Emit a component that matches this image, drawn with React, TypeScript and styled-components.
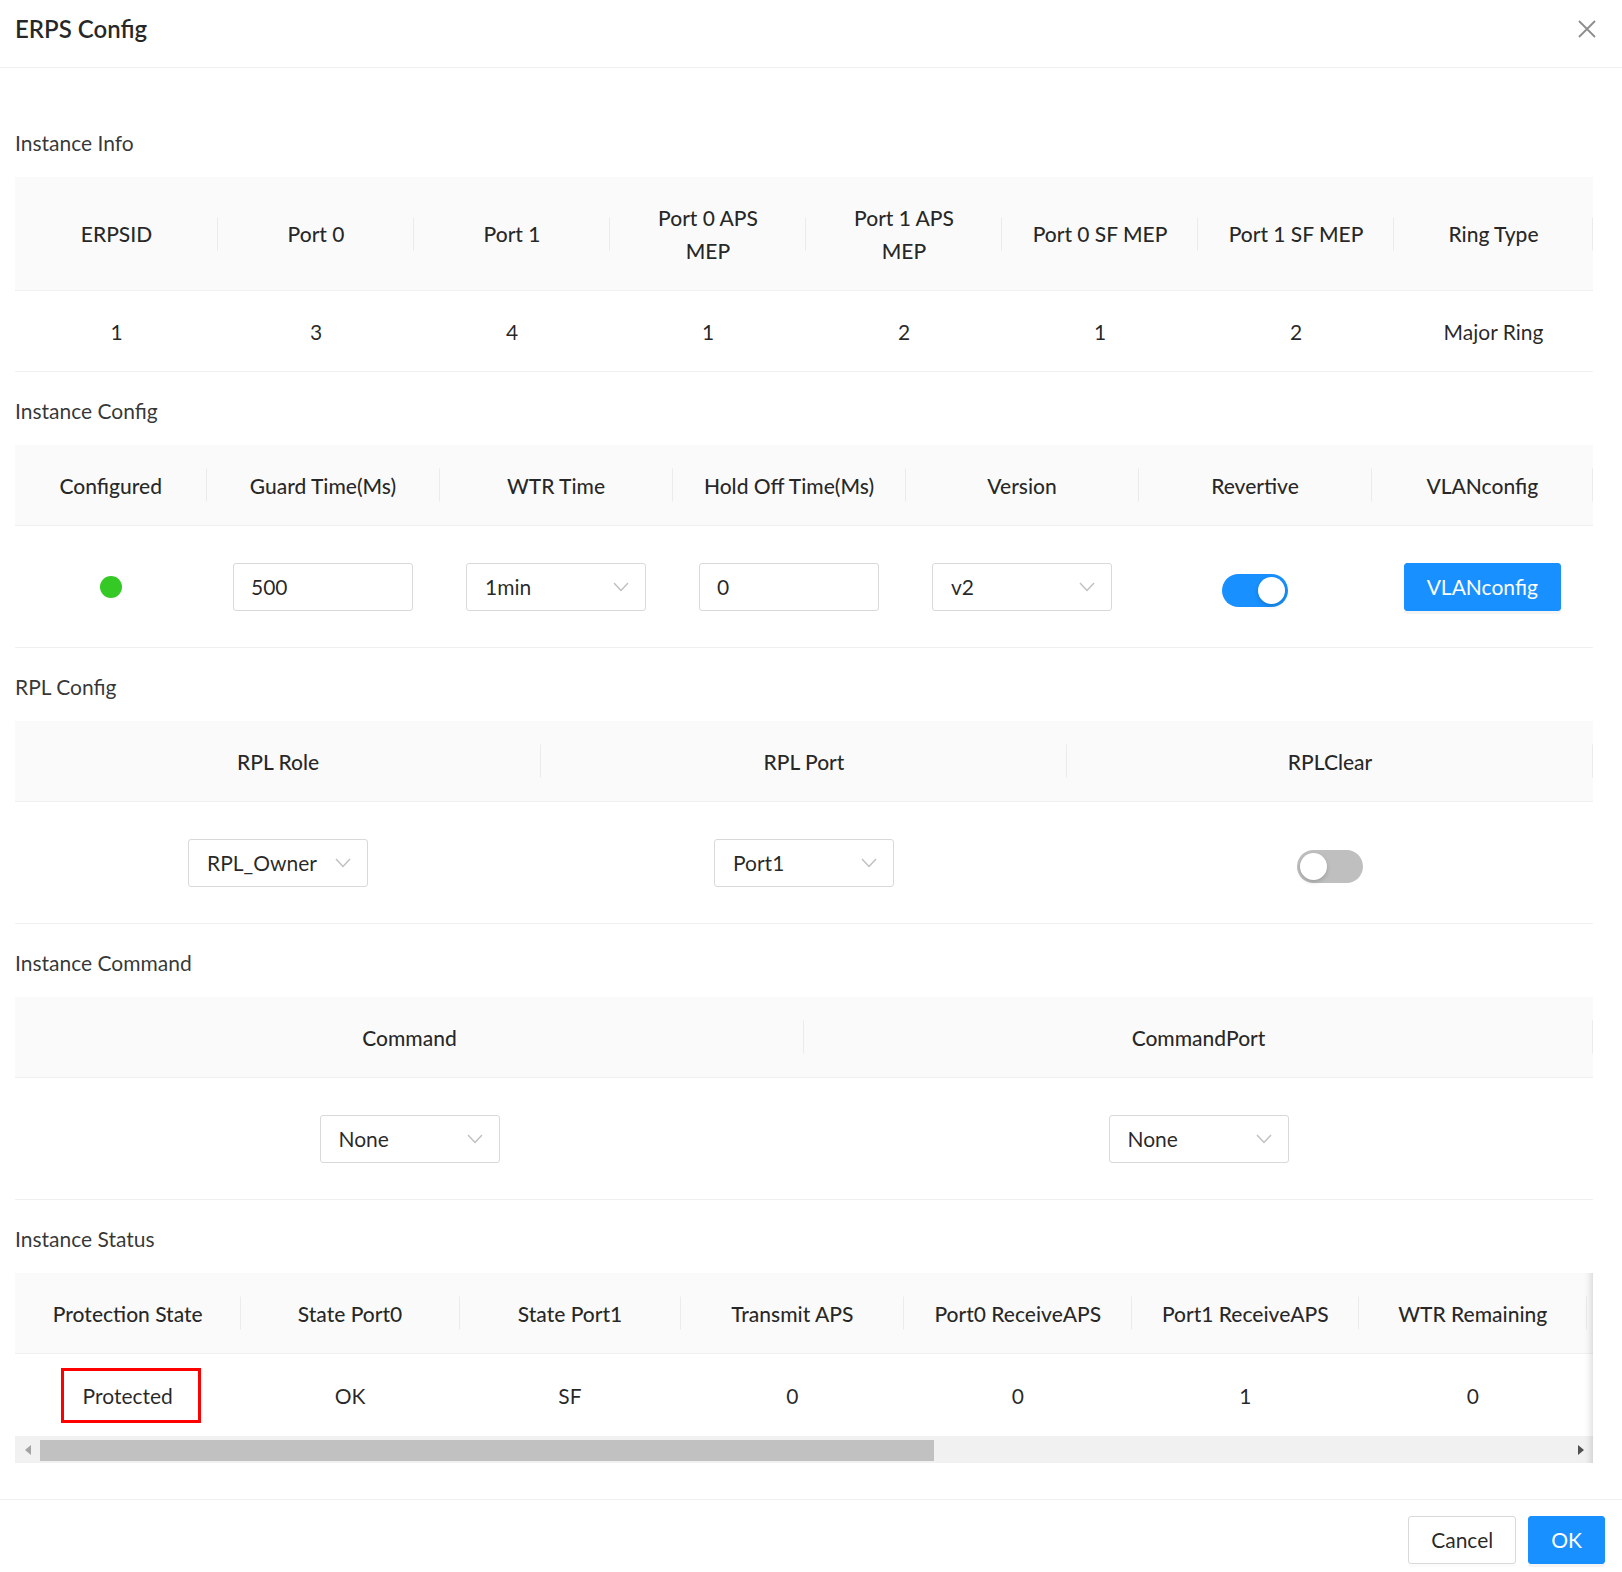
import React from 'react';
import styled, { createGlobalStyle } from 'styled-components';

const GlobalStyle = createGlobalStyle`
  html, body {
    margin: 0;
    padding: 0;
    background: #fff;
  }
  body {
    font-family: Lato, "Noto Sans", "Liberation Sans", sans-serif;
    font-size: 21px;
    line-height: 33px;
    color: rgba(0, 0, 0, 0.85);
  }
  * {
    box-sizing: border-box;
  }
`

const Modal = styled.div`
  width: 1622px;
  height: 1572px;
  overflow: hidden;
  display: flex;
  flex-direction: column;
  background: #fff;
`

const Header = styled.header`
  display: flex;
  justify-content: space-between;
  align-items: flex-start;
  height: 68px;
  padding: 12px 26px 0 15px;
  border-bottom: 1px solid #f0f0f0;
`

const Title = styled.h1`
  margin: 0;
  font-size: 24px;
  line-height: 33px;
  font-weight: 600;
  color: rgba(0, 0, 0, 0.85);
`

const CloseButton = styled.button`
  margin-top: 8px;
  padding: 0;
  width: 18px;
  height: 18px;
  border: 0;
  background: none;
  display: flex;
  cursor: pointer;
`

const Body = styled.main`
  flex: 1;
  padding: 58px 29px 0 15px;
`

const Section = styled.section`
  margin-bottom: 22px;
`

const SectionTitle = styled.h2`
  margin: 0 0 18px;
  font-size: 21px;
  line-height: 33px;
  font-weight: 400;
  color: rgba(0, 0, 0, 0.8);
`

const Grid = styled.div<{ $cols: string }>`
  display: grid;
  grid-template-columns: ${(p) => p.$cols};
  width: 100%;
`

const HeadCell = styled.div`
  position: relative;
  display: flex;
  align-items: center;
  justify-content: center;
  padding: 23.5px 12px;
  background: #fafafa;
  border-bottom: 1px solid #f0f0f0;
  font-weight: 500;
  text-align: center;
  white-space: pre-line;
  color: rgba(0, 0, 0, 0.85);

  &:not(:last-child)::before {
    content: '';
    position: absolute;
    right: 0;
    top: 50%;
    width: 1px;
    height: 33px;
    transform: translateY(-50%);
    background: rgba(0, 0, 0, 0.06);
  }
`

const Cell = styled.div<{ $pad?: number }>`
  display: flex;
  align-items: center;
  justify-content: center;
  padding: ${(p) => p.$pad ?? 23.5}px 12px;
  border-bottom: 1px solid #f0f0f0;
  text-align: center;
  white-space: nowrap;
`

const Field = styled.input`
  width: 180px;
  height: 48px;
  padding: 0 17px;
  border: 1px solid #d9d9d9;
  border-radius: 3px;
  font: inherit;
  color: rgba(0, 0, 0, 0.85);
  background: #fff;
  outline: none;
`

const SelectBox = styled.div`
  width: 180px;
  height: 48px;
  display: flex;
  align-items: center;
  justify-content: space-between;
  padding: 0 16px 0 18px;
  border: 1px solid #d9d9d9;
  border-radius: 3px;
  background: #fff;
  color: rgba(0, 0, 0, 0.85);
`

const Dot = styled.span`
  width: 22px;
  height: 22px;
  border-radius: 50%;
  background: #34c924;
`

const SwitchTrack = styled.button<{ $on: boolean }>`
  position: relative;
  width: 66px;
  height: 33px;
  margin-top: 8px;
  padding: 0;
  border: 0;
  border-radius: 17px;
  background: ${(p) => (p.$on ? '#1890ff' : '#bfbfbf')};
  cursor: pointer;

  &::after {
    content: '';
    position: absolute;
    top: 3px;
    left: ${(p) => (p.$on ? '36px' : '3px')};
    width: 27px;
    height: 27px;
    border-radius: 50%;
    background: #fff;
    box-shadow: 0 2px 4px rgba(0, 35, 11, 0.2);
  }
`

const Button = styled.button<{ $primary?: boolean }>`
  height: 48px;
  padding: 0 22px;
  border: 1px solid ${(p) => (p.$primary ? '#1890ff' : '#d9d9d9')};
  border-radius: 3px;
  background: ${(p) => (p.$primary ? '#1890ff' : '#fff')};
  color: ${(p) => (p.$primary ? '#fff' : 'rgba(0, 0, 0, 0.85)')};
  font: inherit;
  box-shadow: 0 3px 0 rgba(0, 0, 0, ${(p) => (p.$primary ? 0.045 : 0.016)});
  cursor: pointer;
`

const Highlight = styled.span`
  margin: -11px 0 -11px 6px;
  padding: 8px 25px 8px 19px;
  border: 3px solid #ff0000;
`

const ScrollWrap = styled.div`
  position: relative;

  &::after {
    content: '';
    position: absolute;
    top: 0;
    right: 0;
    bottom: 0;
    width: 12px;
    pointer-events: none;
    box-shadow: inset -9px 0 8px -8px rgba(0, 0, 0, 0.18);
  }
`

const Clip = styled.div`
  overflow: hidden;
`

const ScrollBar = styled.div`
  display: flex;
  height: 26px;
  background: #f1f1f1;
`

const ScrollArrow = styled.div<{ $dir: 'left' | 'right' }>`
  width: 25px;
  display: flex;
  align-items: center;
  justify-content: center;

  &::before {
    content: '';
    width: 0;
    height: 0;
    border-top: 5px solid transparent;
    border-bottom: 5px solid transparent;
    ${(p) =>
      p.$dir === 'left'
        ? 'border-right: 6px solid #a3a3a3;'
        : 'border-left: 6px solid #505050;'}
  }
`

const ScrollThumb = styled.div`
  width: 894px;
  margin: 3px 0 2px;
  background: #c1c1c1;
`

const ScrollRest = styled.div`
  flex: 1;
`

const Footer = styled.footer`
  display: flex;
  justify-content: flex-end;
  gap: 12px;
  padding: 15.5px 17px 0;
  border-top: 1px solid #f0f0f0;
  height: 73px;
`

function CloseIcon() {
  return (
    <svg width="18" height="18" viewBox="0 0 18 18">
      <path d="M1 1 L17 17 M17 1 L1 17" stroke="rgba(0,0,0,0.45)" strokeWidth="1.8" fill="none" />
    </svg>
  );
}

function Chevron() {
  return (
    <svg width="16" height="10" viewBox="0 0 16 10">
      <path d="M1 1 L8 8.5 L15 1" stroke="#bfbfbf" strokeWidth="1.4" fill="none" />
    </svg>
  );
}

function Select({ value }: { value: string }) {
  return (
    <SelectBox>
      <span>{value}</span>
      <Chevron />
    </SelectBox>
  );
}

const infoHead = ['ERPSID', 'Port 0', 'Port 1', 'Port 0 APS\nMEP', 'Port 1 APS\nMEP', 'Port 0 SF MEP', 'Port 1 SF MEP', 'Ring Type'];
const infoRow = ['1', '3', '4', '1', '2', '1', '2', 'Major Ring'];

const configHead = ['Configured', 'Guard Time(Ms)', 'WTR Time', 'Hold Off Time(Ms)', 'Version', 'Revertive', 'VLANconfig'];

const statusHead = [
  'Protection State', 'State Port0', 'State Port1', 'Transmit APS',
  'Port0 ReceiveAPS', 'Port1 ReceiveAPS', 'WTR Remaining', '',
];
const statusRow = ['OK', 'SF', '0', '0', '1', '0', ''];

function App() {
  const ctrlPad = 36.5;
  return (
    <Modal>
      <GlobalStyle />
      <Header>
        <Title>ERPS Config</Title>
        <CloseButton aria-label="Close">
          <CloseIcon />
        </CloseButton>
      </Header>

      <Body>
        <Section>
          <SectionTitle>Instance Info</SectionTitle>
          <Grid $cols="203px repeat(6, 196px) 1fr">
            {infoHead.map((h) => (
              <HeadCell key={h}>{h}</HeadCell>
            ))}
            {infoRow.map((v, i) => (
              <Cell key={i}>{v}</Cell>
            ))}
          </Grid>
        </Section>

        <Section>
          <SectionTitle>Instance Config</SectionTitle>
          <Grid $cols="191.5px repeat(5, 233px) 1fr">
            {configHead.map((h) => (
              <HeadCell key={h}>{h}</HeadCell>
            ))}
            <Cell $pad={ctrlPad}><Dot /></Cell>
            <Cell $pad={ctrlPad}><Field defaultValue="500" /></Cell>
            <Cell $pad={ctrlPad}><Select value="1min" /></Cell>
            <Cell $pad={ctrlPad}><Field defaultValue="0" /></Cell>
            <Cell $pad={ctrlPad}><Select value="v2" /></Cell>
            <Cell $pad={ctrlPad}><SwitchTrack $on aria-label="Revertive" /></Cell>
            <Cell $pad={ctrlPad}><Button $primary>VLANconfig</Button></Cell>
          </Grid>
        </Section>

        <Section>
          <SectionTitle>RPL Config</SectionTitle>
          <Grid $cols="repeat(3, 1fr)">
            <HeadCell>RPL Role</HeadCell>
            <HeadCell>RPL Port</HeadCell>
            <HeadCell>RPLClear</HeadCell>
            <Cell $pad={ctrlPad}><Select value="RPL_Owner" /></Cell>
            <Cell $pad={ctrlPad}><Select value="Port1" /></Cell>
            <Cell $pad={ctrlPad}><SwitchTrack $on={false} aria-label="RPLClear" /></Cell>
          </Grid>
        </Section>

        <Section>
          <SectionTitle>Instance Command</SectionTitle>
          <Grid $cols="repeat(2, 1fr)">
            <HeadCell>Command</HeadCell>
            <HeadCell>CommandPort</HeadCell>
            <Cell $pad={ctrlPad}><Select value="None" /></Cell>
            <Cell $pad={ctrlPad}><Select value="None" /></Cell>
          </Grid>
        </Section>

        <Section>
          <SectionTitle>Instance Status</SectionTitle>
          <ScrollWrap>
            <Clip>
              <Grid $cols="225.5px 219px 221px 223.5px 227.5px 227.5px 227.5px 1fr">
                {statusHead.map((h, i) => (
                  <HeadCell key={i}>{h}</HeadCell>
                ))}
                <Cell $pad={24.5}><Highlight>Protected</Highlight></Cell>
                {statusRow.map((v, i) => (
                  <Cell key={i} $pad={24.5}>{v}</Cell>
                ))}
              </Grid>
            </Clip>
            <ScrollBar>
              <ScrollArrow $dir="left" />
              <ScrollThumb />
              <ScrollRest />
              <ScrollArrow $dir="right" />
            </ScrollBar>
          </ScrollWrap>
        </Section>
      </Body>

      <Footer>
        <Button>Cancel</Button>
        <Button $primary>OK</Button>
      </Footer>
    </Modal>
  );
}

export default App;
